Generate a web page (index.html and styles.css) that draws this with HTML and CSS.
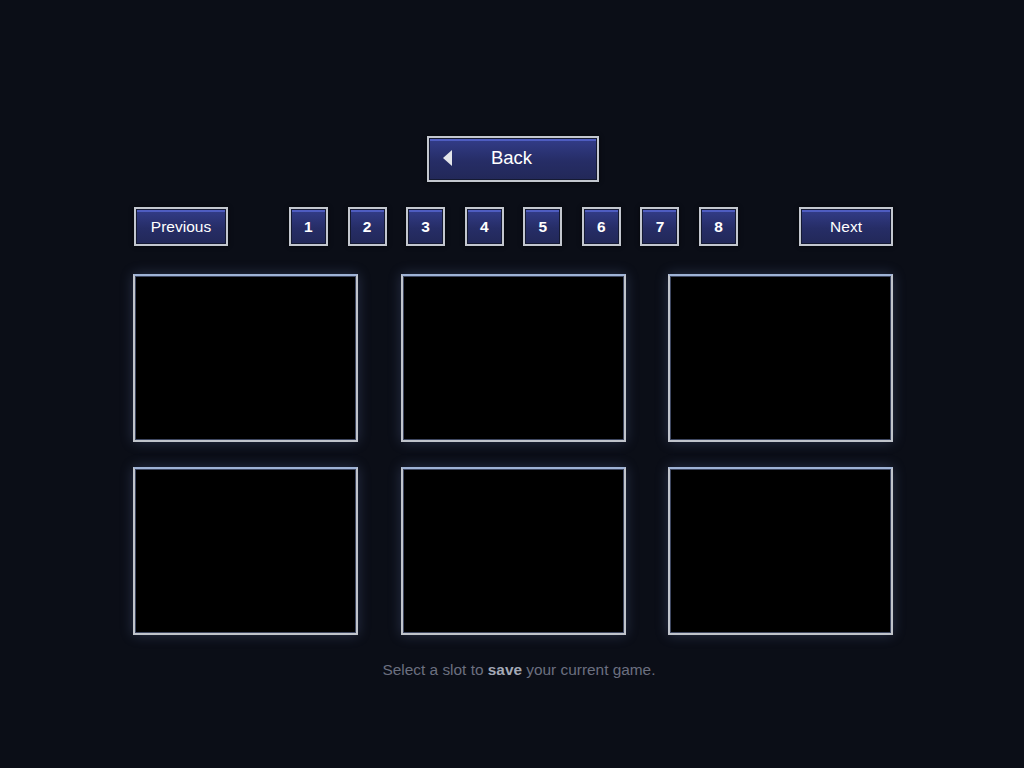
FILE: index.html
```html
<!DOCTYPE html>
<html>
<head>
<meta charset="utf-8">
<link rel="stylesheet" href="styles.css">
</head>
<body>
<div class="screen">
  <div class="top">
    <button class="btn back"><span class="arrow"></span><span class="label">Back</span></button>
  </div>
  <div class="nav">
    <button class="btn wide">Previous</button>
    <div class="pages">
      <button class="btn num">1</button>
      <button class="btn num">2</button>
      <button class="btn num">3</button>
      <button class="btn num">4</button>
      <button class="btn num">5</button>
      <button class="btn num">6</button>
      <button class="btn num">7</button>
      <button class="btn num">8</button>
    </div>
    <button class="btn wide">Next</button>
  </div>
  <div class="slots">
    <div class="slot"></div>
    <div class="slot"></div>
    <div class="slot"></div>
    <div class="slot"></div>
    <div class="slot"></div>
    <div class="slot"></div>
  </div>
  <p class="hint">Select a slot to <b>save</b> your current game.</p>
</div>
</body>
</html>
```
FILE: styles.css
```css
html, body {
  margin: 0;
  padding: 0;
  background: #0b0e17;
  height: 100%;
}
body {
  font-family: "Liberation Sans", Arial, sans-serif;
}
.screen {
  width: 760px;
  margin-left: 133px;
  padding-top: 136px;
}
.top {
  display: flex;
  justify-content: center;
}
.btn {
  box-sizing: border-box;
  border: 2px solid #c3c7cf;
  box-shadow: inset 0 0 0 1px #151a33, inset 0 2px 0 1px #4e5cc0, 0 0 4px rgba(0,0,0,0.7);
  background: linear-gradient(#333d8a, #262d66 55%, #222858);
  color: #fff;
  font-family: "Liberation Sans", Arial, sans-serif;
  padding: 0;
  display: flex;
  align-items: center;
  justify-content: center;
}
.back {
  width: 172px;
  height: 46px;
  font-size: 18.5px;
  position: relative;
}
.back .label {
  margin-left: -3px;
  margin-top: -2px;
}
.back .arrow {
  position: absolute;
  left: 14px;
  top: 12px;
  width: 0;
  height: 0;
  border-top: 8px solid transparent;
  border-bottom: 8px solid transparent;
  border-right: 9px solid #e4e6ea;
}
.nav {
  margin-top: 25px;
  padding-left: 1px;
  display: flex;
  justify-content: space-between;
  align-items: center;
}
.wide {
  width: 94px;
  height: 39px;
  font-size: 15.5px;
}
.pages {
  display: flex;
  gap: 19.6px;
}
.num {
  width: 39px;
  height: 39px;
  font-size: 15.5px;
  font-weight: bold;
}
.slots {
  margin-top: 28px;
  display: grid;
  grid-template-columns: repeat(3, 225px);
  grid-template-rows: repeat(2, 168px);
  column-gap: 42.5px;
  row-gap: 25px;
}
.slot {
  box-sizing: border-box;
  background: #000;
  border: 2px solid #c0c4cb;
  border-top-color: #9fb3d6;
  box-shadow: 0 0 12px rgba(120,140,200,0.28), inset 0 0 0 1px #3e4760;
}
.hint {
  margin: 26px 0 0;
  padding-left: 12px;
  text-align: center;
  color: #6b7080;
  font-size: 15.4px;
}
.hint b {
  color: #a3a9b6;
}
```
